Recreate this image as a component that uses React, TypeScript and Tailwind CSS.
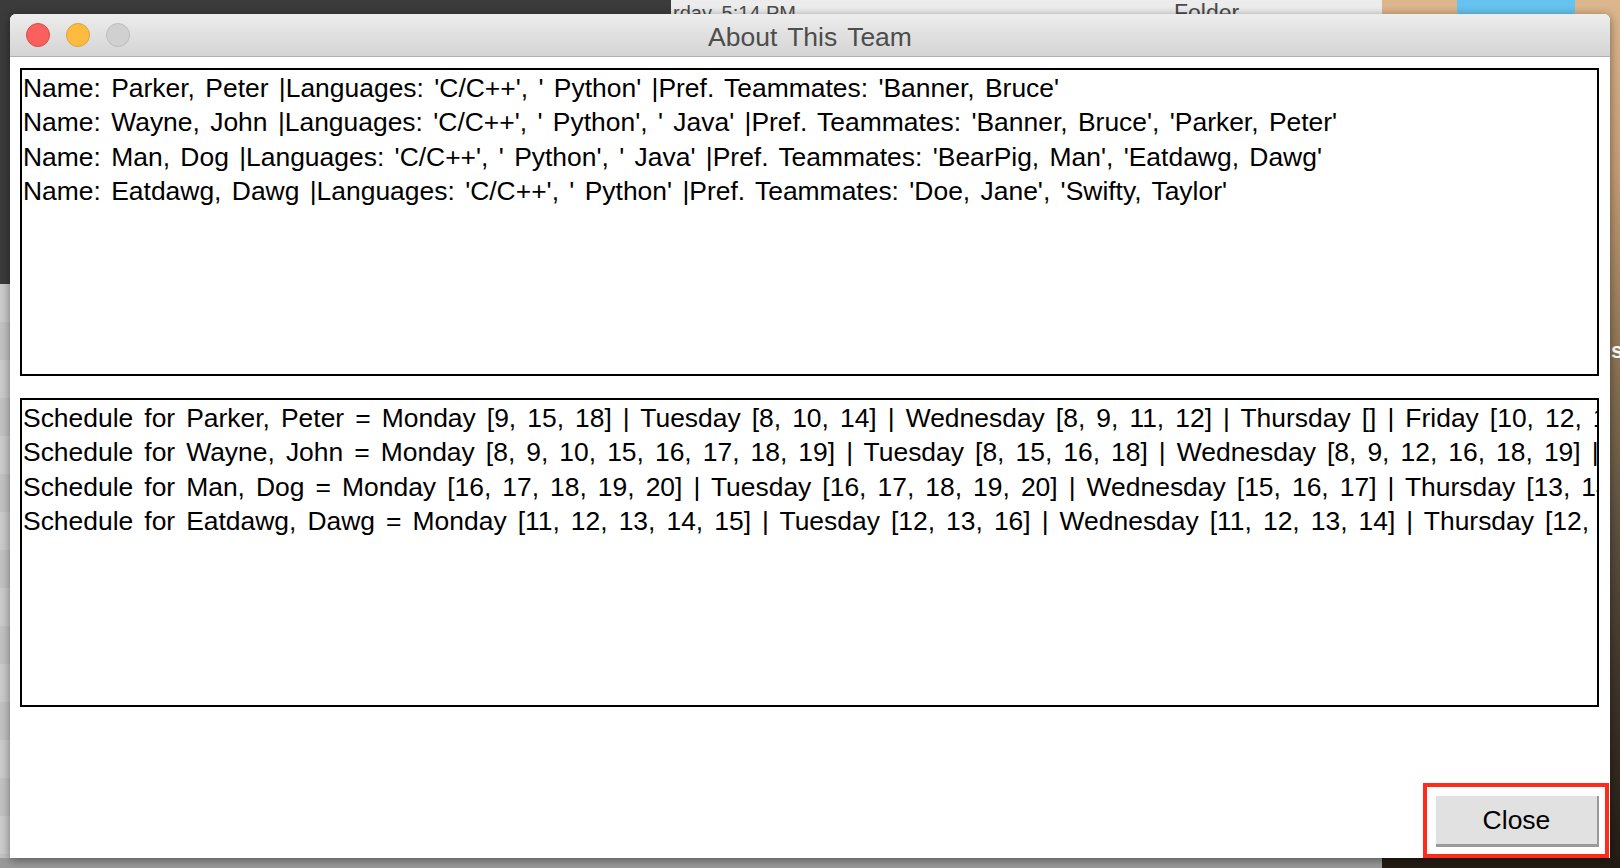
import React from "react";

const teamLines = [
  "Name: Parker, Peter |Languages: 'C/C++', ' Python' |Pref. Teammates: 'Banner, Bruce'",
  "Name: Wayne, John |Languages: 'C/C++', ' Python', ' Java' |Pref. Teammates: 'Banner, Bruce', 'Parker, Peter'",
  "Name: Man, Dog |Languages: 'C/C++', ' Python', ' Java' |Pref. Teammates: 'BearPig, Man', 'Eatdawg, Dawg'",
  "Name: Eatdawg, Dawg |Languages: 'C/C++', ' Python' |Pref. Teammates: 'Doe, Jane', 'Swifty, Taylor'",
];

const scheduleLines = [
  "Schedule for Parker, Peter = Monday [9, 15, 18] | Tuesday [8, 10, 14] | Wednesday [8, 9, 11, 12] | Thursday [] | Friday [10, 12, 14] | Saturday [] | Sunday []",
  "Schedule for Wayne, John = Monday [8, 9, 10, 15, 16, 17, 18, 19] | Tuesday [8, 15, 16, 18] | Wednesday [8, 9, 12, 16, 18, 19] | Thursday [8, 9] | Friday []",
  "Schedule for Man, Dog = Monday [16, 17, 18, 19, 20] | Tuesday [16, 17, 18, 19, 20] | Wednesday [15, 16, 17] | Thursday [13, 14, 15] | Friday [16]",
  "Schedule for Eatdawg, Dawg = Monday [11, 12, 13, 14, 15] | Tuesday [12, 13, 16] | Wednesday [11, 12, 13, 14] | Thursday [12, 13] | Friday [11]",
];

function TextBox({ lines, h, ws }: { lines: string[]; h: string; ws: string }) {
  return (
    <div className={`${h} shrink-0 border-2 border-black overflow-hidden bg-white`}>
      <div className={`${ws} pl-[1px] pt-[1px] text-[26.45px] leading-[34.3px] text-black whitespace-pre`}>
        {lines.map((l, i) => (
          <div key={i}>{l}</div>
        ))}
      </div>
    </div>
  );
}

export default function App() {
  return (
    <div
      className="relative w-[1620px] h-[868px] overflow-hidden bg-[#3b3b3b]"
      style={{ fontFamily: '"Liberation Sans", Arial, sans-serif' }}
    >
      {/* desktop background */}
      <div className="absolute left-0 top-[284px] w-[10px] bottom-0 bg-[repeating-linear-gradient(180deg,#cbcbcb_0px,#cbcbcb_38px,#c2c2c2_38px,#c2c2c2_76px)]" />
      <div className="absolute left-[671px] top-0 w-[711px] h-[14px] bg-[#ececec] overflow-hidden">
        <div className="absolute left-[2px] top-[1px] text-[20px] leading-[24px] text-[#4a4a4a] whitespace-nowrap">
          rday, 5:14 PM
        </div>
        <div className="absolute left-[503px] top-[0px] text-[23px] leading-[26px] text-[#4a4a4a] whitespace-nowrap">
          Folder
        </div>
      </div>
      <div className="absolute left-[1382px] top-0 right-0 bottom-0 bg-[linear-gradient(180deg,#dcb68c_0%,#c39c74_20%,#8f7656_40%,#5e5240_60%,#3c3428_80%,#231c14_100%)]" />
      <div className="absolute left-[1457px] top-0 w-[118px] h-[14px] bg-[#66c2ee] rounded-b-[3px]" />
      <div className="absolute left-[1611px] top-[339px] text-[22px] leading-[24px] font-bold text-white">s</div>
      <div className="absolute left-0 bottom-0 w-[1382px] h-[10px] bg-[#9a9a9a]" />

      {/* window */}
      <div className="absolute left-[10px] top-[14px] w-[1600px] h-[844px] rounded-t-[6px] bg-white flex flex-col shadow-[0_2px_10px_rgba(0,0,0,0.45)]">
        <div className="h-[43px] shrink-0 grid grid-cols-[1fr_auto_1fr] items-center rounded-t-[6px] border-b border-[#b1b1b1] bg-gradient-to-b from-[#ededed] to-[#d4d4d4]">
          <div className="flex items-center gap-[16px] pl-[16px]">
            <span className="w-[24px] h-[24px] rounded-full bg-[#fc605c] border border-[#de4944]" />
            <span className="w-[24px] h-[24px] rounded-full bg-[#fdbc40] border border-[#dea236]" />
            <span className="w-[24px] h-[24px] rounded-full bg-[#d0d0d0] border border-[#bcbcbc]" />
          </div>
          <div className="pt-[4px] text-[26.5px] leading-[38px] [word-spacing:3px] text-[#4d4d4d] whitespace-nowrap">
            About This Team
          </div>
          <div />
        </div>

        <div className="flex-1 flex flex-col pt-[11px] pl-[10px] pr-[11px] pb-[11px]">
          <TextBox lines={teamLines} h="h-[308px]" ws="[word-spacing:3px]" />
          <div className="h-[22px] shrink-0" />
          <TextBox lines={scheduleLines} h="h-[309px]" ws="[word-spacing:3.7px]" />
          <div className="flex-1 flex items-end justify-end">
            <button className="w-[163px] h-[51px] flex items-center justify-center pt-[2px] bg-[#e1e1e1] border-r-2 border-b-[3px] border-[#9a9a9a] text-[26.5px] text-black">
              Close
            </button>
          </div>
        </div>
      </div>

      {/* red annotation */}
      <div className="absolute left-[1423px] top-[783px] w-[186px] h-[75px] border-4 border-[#fe2b1b]" />
    </div>
  );
}
